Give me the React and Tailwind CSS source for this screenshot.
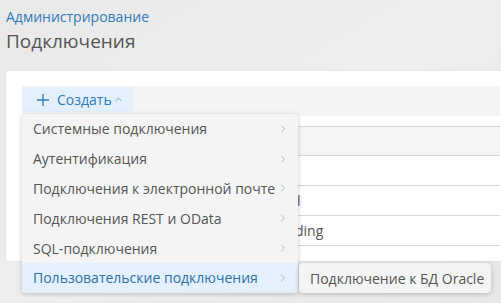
import { ChevronUp, ChevronRight } from "lucide-react";

const menuItems = [
  "Системные подключения",
  "Аутентификация",
  "Подключения к электронной почте",
  "Подключения REST и OData",
  "SQL-подключения",
  "Пользовательские подключения",
];

const rows = [
  { text: "", pad: "pl-[274px]" },
  { text: "l", pad: "pl-[274px]" },
  { text: "ding", pad: "pl-[272px]" },
];

const PlusIcon = () => (
  <svg width="12" height="12" viewBox="0 0 12 12" fill="none" stroke="currentColor" strokeWidth="1.3">
    <path d="M6 0v12M0 6h12" />
  </svg>
);

const App = () => {
  return (
    <div
      className="relative h-[303px] w-[501px] overflow-hidden bg-gradient-to-br from-[#e9e9e9] via-[#eeeeee] to-[#e8e8e8] pl-[6px] text-[14px] text-[#555]"
      style={{ fontFamily: '"Open Sans", "Noto Sans", sans-serif' }}
    >
      <div className="pt-[7px] text-[14px] leading-[20px] text-[#2f7ab8]">Администрирование</div>
      <h1 className="mt-[1px] text-[19px] leading-[26px] text-[#555]">Подключения</h1>

      <div className="mt-[17px] h-[190px] w-[510px] rounded-[4px] bg-white px-[16px] pt-[15px] shadow-[0_0_2px_rgba(0,0,0,0.08)]">
        <div className="flex h-[30px] items-start bg-[#f4f4f4]">
          <button className="mt-[1px] flex h-[25px] w-[111px] items-center rounded-[2px] bg-[#e3f0fb] pl-[15px] text-[#2f7ab8]">
            <PlusIcon />
            <span className="ml-[8px]">Создать</span>
            <ChevronUp size={11} strokeWidth={1.4} className="ml-[1px]" />
          </button>
        </div>
        <div className="mt-[10px] border-l border-[#dcdcdc]">
          <div className="h-[29px] border-t border-[#d6d6d6] bg-[#f5f5f5]" />
          {rows.map((r, i) => (
            <div
              key={i}
              className={`flex h-[30px] items-center border-t border-[#d6d6d6] ${r.pad} text-[#555]`}
            >
              {r.text}
            </div>
          ))}
          <div className="border-t border-[#d6d6d6]" />
        </div>
      </div>

      <div className="absolute left-[22px] top-[114px] w-[276px] rounded-[4px] bg-[#f4f4f4] shadow-[0_1px_5px_rgba(0,0,0,0.22)]">
        {menuItems.map((item, i) => {
          const active = i === menuItems.length - 1;
          return (
            <div
              key={item}
              className={`flex h-[29.8px] items-center justify-between pl-[11px] pr-[9px] ${
                active ? "rounded-b-[4px] bg-[#e4f1fc] text-[#2d6ea6]" : "text-[#555]"
              }`}
            >
              <span>{item}</span>
              <ChevronRight size={12} strokeWidth={1.2} className="text-[#888]" />
            </div>
          );
        })}
      </div>

      <div className="absolute left-[299px] top-[263px] flex h-[30px] w-[192px] items-center rounded-[4px] bg-[#f4f4f4] pl-[11px] text-[#555] shadow-[0_1px_5px_rgba(0,0,0,0.22)]">
        Подключение к БД Oracle
      </div>
    </div>
  );
};

export default App;
